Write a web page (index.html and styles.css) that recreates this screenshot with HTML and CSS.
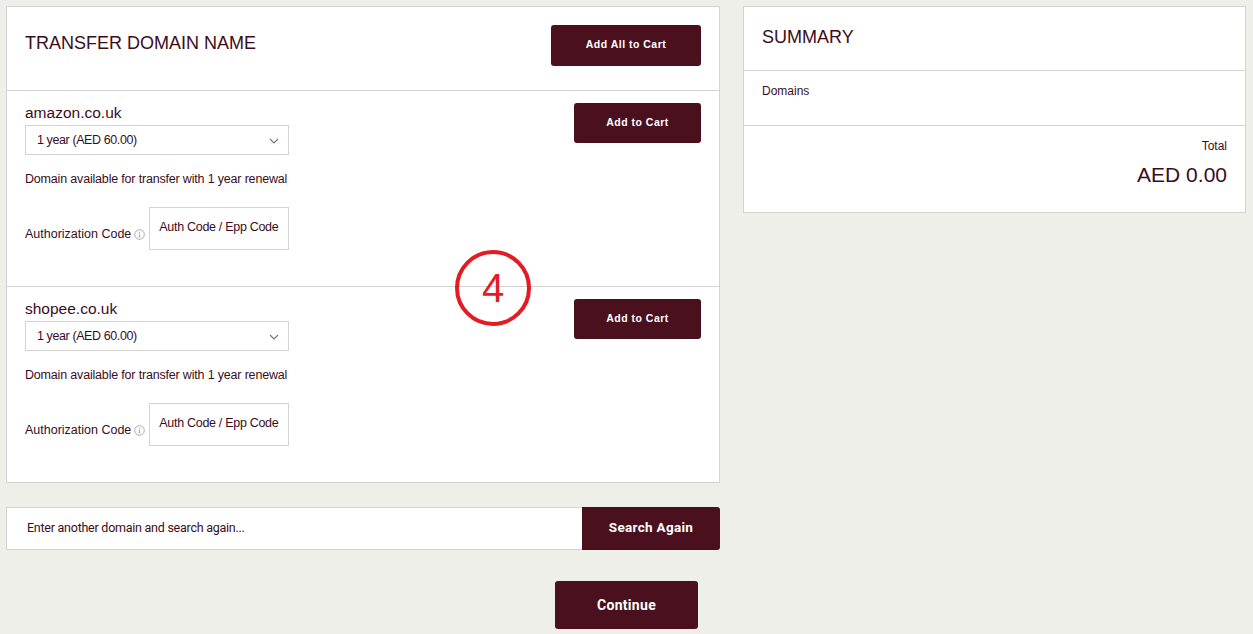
FILE: index.html
```
<!DOCTYPE html>
<html lang="en">
<head>
  <meta charset="UTF-8">
  <meta name="viewport" content="width=device-width, initial-scale=1.0">
  <title>Transfer Domain Name</title>
  <link rel="stylesheet" href="styles.css">
</head>
<body>
  <div class="page">
    <div class="main-col">
      <div class="panel transfer">
        <div class="panel-head">
          <h1 class="title">TRANSFER DOMAIN NAME</h1>
          <button class="btn btn-all">Add All to Cart</button>
        </div>

        <div class="domain-item">
          <div class="domain-info">
            <div class="domain-name">amazon.co.uk</div>
            <div class="select">
              <span>1 year (AED 60.00)</span>
              <svg class="chev" width="10" height="6" viewBox="0 0 10 6"><path d="M1 1l4 4 4-4" fill="none" stroke="#8a6a74" stroke-width="1.1"/></svg>
            </div>
            <p class="avail">Domain available for transfer with 1 year renewal</p>
            <div class="auth-row">
              <span class="auth-label">Authorization Code
                <svg class="info" width="11" height="11" viewBox="0 0 11 11"><circle cx="5.5" cy="5.5" r="4.8" fill="none" stroke="#a9a0a3" stroke-width="0.9"/><path d="M5.5 4.6v3.3M4.6 7.9h1.8" stroke="#a9a0a3" stroke-width="0.9"/><circle cx="5.5" cy="3.2" r="0.6" fill="#a9a0a3"/></svg>
              </span>
              <div class="auth-input">Auth Code / Epp Code</div>
            </div>
          </div>
          <button class="btn btn-cart">Add to Cart</button>
        </div>

        <div class="domain-item">
          <div class="domain-info">
            <div class="domain-name">shopee.co.uk</div>
            <div class="select">
              <span>1 year (AED 60.00)</span>
              <svg class="chev" width="10" height="6" viewBox="0 0 10 6"><path d="M1 1l4 4 4-4" fill="none" stroke="#8a6a74" stroke-width="1.1"/></svg>
            </div>
            <p class="avail">Domain available for transfer with 1 year renewal</p>
            <div class="auth-row">
              <span class="auth-label">Authorization Code
                <svg class="info" width="11" height="11" viewBox="0 0 11 11"><circle cx="5.5" cy="5.5" r="4.8" fill="none" stroke="#a9a0a3" stroke-width="0.9"/><path d="M5.5 4.6v3.3M4.6 7.9h1.8" stroke="#a9a0a3" stroke-width="0.9"/><circle cx="5.5" cy="3.2" r="0.6" fill="#a9a0a3"/></svg>
              </span>
              <div class="auth-input">Auth Code / Epp Code</div>
            </div>
          </div>
          <button class="btn btn-cart">Add to Cart</button>
        </div>

        <span class="step-mark">4</span>
      </div>

      <div class="search-bar">
        <div class="search-input">Enter another domain and search again...</div>
        <button class="btn btn-search">Search Again</button>
      </div>

      <div class="continue-row">
        <button class="btn btn-continue">Continue</button>
      </div>
    </div>

    <div class="panel summary">
      <div class="summary-head">SUMMARY</div>
      <div class="summary-domains">Domains</div>
      <div class="summary-total">
        <div class="total-label">Total</div>
        <div class="total-value">AED 0.00</div>
      </div>
    </div>
  </div>
</body>
</html>
```

FILE: styles.css
```
body {
  margin: 0;
  background: #efefea;
  font-family: "Liberation Sans", Arial, sans-serif;
  color: #3b0d1c;
}

.page {
  display: flex;
  align-items: flex-start;
  gap: 23px;
  padding: 6px 7px 0 6px;
}

.main-col {
  width: 714px;
  flex-shrink: 0;
}

.panel {
  background: #fff;
  border: 1px solid #d3d3d3;
}

.transfer {
  position: relative;
}

.panel-head {
  height: 84px;
  box-sizing: border-box;
  display: flex;
  align-items: flex-start;
  justify-content: space-between;
  padding: 18px 18px 0 18px;
  border-bottom: 1px solid #d3d3d3;
}

.title {
  margin: 8px 0 0 0;
  font-size: 18px;
  line-height: 20px;
  font-weight: normal;
}

.btn {
  background: #4a101e;
  color: #fff;
  border: none;
  border-radius: 3px;
  font-family: "Liberation Sans", Arial, sans-serif;
  font-weight: bold;
  cursor: pointer;
}

.btn-all {
  width: 150px;
  height: 41px;
  font-size: 10.5px;
  letter-spacing: 0.5px;
  padding-bottom: 5px;
}

.btn-cart {
  width: 127px;
  height: 40px;
  font-size: 10.5px;
  letter-spacing: 0.5px;
  padding-bottom: 3px;
}

.domain-item {
  display: flex;
  justify-content: space-between;
  align-items: flex-start;
  padding: 12px 18px 36px 18px;
  border-bottom: 1px solid #d3d3d3;
}

.domain-item:last-of-type {
  border-bottom: none;
}

.domain-name {
  font-size: 15.5px;
  line-height: 20px;
}

.select {
  height: 28px;
  margin-top: 2px;
  border: 1px solid #d3d3d3;
  display: flex;
  align-items: center;
  justify-content: space-between;
  padding: 0 0 0 11px;
  box-sizing: content-box;
  width: 251px;
  font-size: 12.5px;
  letter-spacing: -0.4px;
}

.chev {
  margin-right: 9px;
  margin-top: 2px;
}

.avail {
  margin: 15px 0 0 0;
  font-size: 12.5px;
  line-height: 18px;
  letter-spacing: -0.18px;
}

.auth-row {
  display: flex;
  align-items: center;
  margin-top: 19px;
}

.auth-label {
  display: flex;
  align-items: center;
  gap: 3px;
  font-size: 12.5px;
  letter-spacing: 0;
  padding-top: 10px;
  margin-right: 4px;
}

.info {
  margin-top: 2px;
}

.auth-input {
  width: 129px;
  height: 41px;
  border: 1px solid #d3d3d3;
  padding-left: 9px;
  font-size: 12.5px;
  letter-spacing: -0.3px;
  line-height: 38px;
  box-sizing: content-box;
}

.step-mark {
  position: absolute;
  left: 448px;
  top: 243px;
  width: 68px;
  height: 68px;
  border: 4px solid #e31b23;
  border-radius: 50%;
  color: #e31b23;
  font-family: "Liberation Sans", Arial, sans-serif;
  font-size: 40px;
  line-height: 68px;
  text-align: center;
}

.search-bar {
  display: flex;
  margin-top: 24px;
  height: 43px;
}

.search-input {
  flex: 1;
  background: #fff;
  border: 1px solid #d3d3d3;
  border-right: none;
  padding-left: 20px;
  font-family: "Roboto", sans-serif;
  font-size: 12.5px;
  letter-spacing: -0.25px;
  line-height: 39px;
}

.btn-search {
  width: 138px;
  border-radius: 0 3px 3px 0;
  font-family: "Roboto", sans-serif;
  font-size: 13.5px;
  letter-spacing: 0.3px;
  padding-bottom: 4px;
}

.continue-row {
  display: flex;
  justify-content: flex-end;
  padding-right: 22px;
  margin-top: 31px;
}

.btn-continue {
  width: 143px;
  height: 48px;
  font-family: "Roboto", sans-serif;
  font-size: 14px;
  letter-spacing: 0.3px;
  padding-bottom: 2px;
}

.summary {
  flex: 1;
}

.summary-head {
  height: 63px;
  padding-left: 18px;
  font-size: 18px;
  line-height: 60px;
  border-bottom: 1px solid #d3d3d3;
}

.summary-domains {
  height: 55px;
  padding: 12px 18px 0 18px;
  box-sizing: border-box;
  font-size: 12px;
  line-height: 16px;
  border-bottom: 1px solid #d3d3d3;
}

.summary-total {
  height: 86px;
  padding: 12px 18px 0 18px;
  box-sizing: border-box;
  text-align: right;
}

.total-label {
  font-size: 12px;
  line-height: 16px;
}

.total-value {
  margin-top: 8px;
  font-size: 21px;
  line-height: 26px;
}
```
